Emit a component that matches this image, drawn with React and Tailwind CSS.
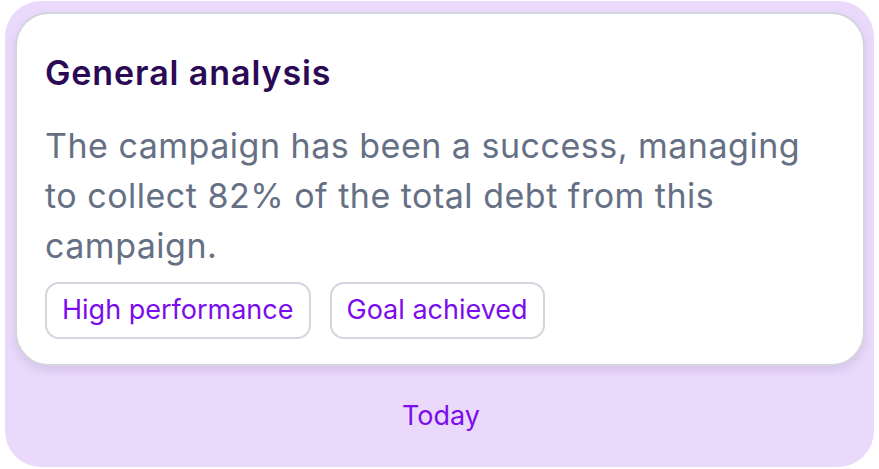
import React from "react";

const tags = ["High performance", "Goal achieved"];

export default function App() {
  return (
    <div
      className="w-[879px] h-[469px] bg-white pt-[1px] pl-[5px] pr-[5px] pb-[2px]"
      style={{ fontFamily: "Inter, 'Noto Sans', sans-serif" }}
    >
      <div className="h-full bg-[#EBD9FC] rounded-[36px] flex flex-col pt-[11px] pl-[10px] pr-[9px]">
        {/* Analysis card */}
        <div className="bg-white rounded-[34px] border-2 border-[#D3D6DE] shadow-[0_5px_8px_rgba(120,110,150,0.18)] pt-[39px] pb-[25px] pl-[28px] pr-[26px]">
          <h2 className="text-[34px] leading-[40px] font-semibold text-[#2A0A55] tracking-[0.9px]">
            General analysis
          </h2>
          <p className="mt-[28px] text-[34px] leading-[50px] text-[#667085] tracking-[0.5px] max-w-[775px]">
            The campaign has been a success, managing to collect 82% of the total debt from this campaign.
          </p>
          <div className="mt-[11px] flex gap-[19px]">
            {tags.map((t) => (
              <span
                key={t}
                className="h-[57px] px-[15px] flex items-center border-2 border-[#D3D6DE] rounded-[14px] text-[27px] text-[#7B0CEB]"
              >
                {t}
              </span>
            ))}
          </div>
        </div>

        <div className="flex-1 flex items-center justify-center">
          <span className="text-[27px] text-[#7B0CEB] pl-[2px]">Today</span>
        </div>
      </div>
    </div>
  );
}
